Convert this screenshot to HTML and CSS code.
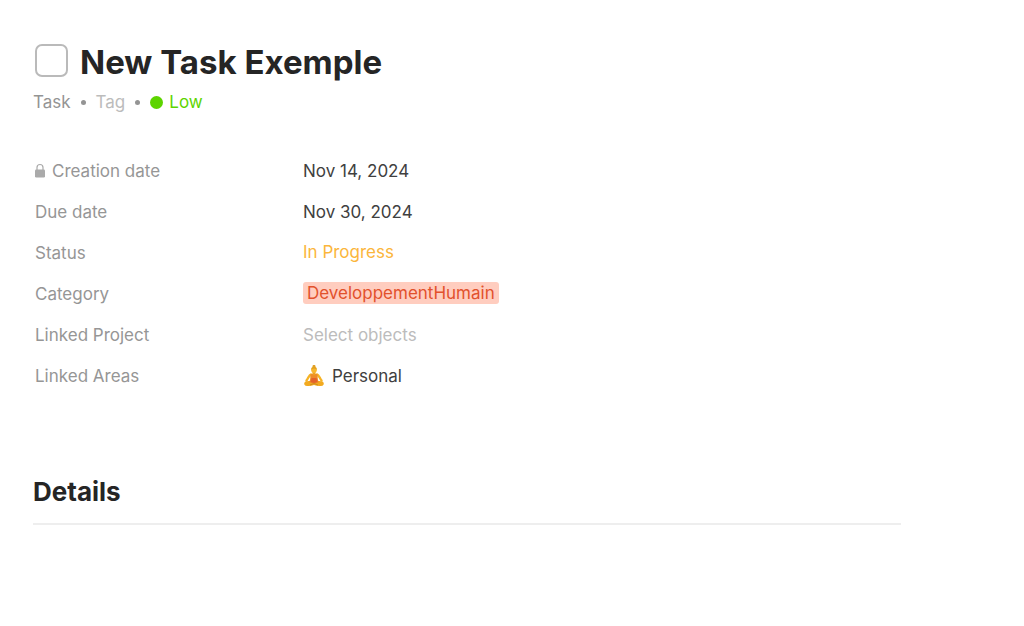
FILE: index.html
```html
<!DOCTYPE html>
<html lang="en">
<head>
<meta charset="utf-8">
<title>New Task Exemple</title>
<link rel="stylesheet" href="styles.css">
</head>
<body>
<main class="page">
  <header class="head">
    <input class="check" type="checkbox" id="done" aria-labelledby="title">
    <h1 class="title" id="title">New Task Exemple</h1>
  </header>
  <div class="meta">
    <span>Task</span><span class="sep"></span><span class="muted">Tag</span><span class="sep"></span><span class="priority"><span class="dot"></span>Low</span>
  </div>
  <dl class="props">
    <div class="row">
      <dt class="name locked"><svg class="lock" viewBox="0 0 10 16" aria-hidden="true"><path d="M2 8V4.500a3 3 0 0 1 6 0V8" fill="none" stroke="#aaaaaa" stroke-width="1.200"/><rect y="6.500" width="10" height="8" rx="1.200" fill="#aaaaaa"/></svg>Creation date</dt>
      <dd class="value">Nov 14, 2024</dd>
    </div>
    <div class="row"><dt class="name">Due date</dt><dd class="value">Nov 30, 2024</dd></div>
    <div class="row"><dt class="name">Status</dt><dd class="value status">In Progress</dd></div>
    <div class="row"><dt class="name">Category</dt><dd class="value category"><span class="tag">DeveloppementHumain</span></dd></div>
    <div class="row"><dt class="name">Linked Project</dt><dd class="value muted">Select objects</dd></div>
    <div class="row"><dt class="name">Linked Areas</dt><dd class="value object">
      <svg class="yoga" viewBox="0 0 22 22" aria-hidden="true">
        <path d="M8 9.500C6 10 5.500 13 3.500 15.500M14 9.500c2 .5 2.500 3.500 4.500 6" fill="none" stroke="#f6b325" stroke-width="2.400" stroke-linecap="round"/>
        <path d="M2.500 16.500c2.500-.8 5-.8 8.500 1 3.500-1.800 6-1.800 8.500-1 1.800.8 1.800 3.500 0 4.200-3 .7-6 .3-8.500-.7-2.500 1-5.500 1.400-8.500.7-1.800-.7-1.800-3.400 0-4.200Z" fill="#f2aa20"/>
        <path d="M7.500 9.300 11 8.500l3.500.8.3 4.700.8 3.200L11 19l-4.600-1.800.8-3.200Z" fill="#ee8b28"/>
        <path d="M8.500 13h5l1 4L11 18l-3.500-1Z" fill="#e4622a"/>
        <path d="M9.500 6h3v3.200L11 10.500 9.500 9.200Z" fill="#eda020"/>
        <rect x="9.500" y="0" width="3" height="3" rx="1.200" fill="#dd9c20"/>
        <rect x="8.200" y="1.800" width="5.600" height="6.200" rx="2.400" fill="#f8b82e"/>
        <path d="M8.200 4.500c0-3.500 5.600-3.500 5.600 0-1.600-1.300-4-1.300-5.600 0Z" fill="#dd9c20"/>
        <path d="m7 20 4-1.500 4 1.500" fill="none" stroke="#cf8c1d"/>
      </svg>Personal</dd></div>
  </dl>
  <section class="details"><h2 class="heading">Details</h2></section>
</main>
</body>
</html>
```
FILE: styles.css
```css
* { box-sizing: border-box; }
body { margin: 0; background: #fff; color: #252525; font-family: Inter, sans-serif; font-size: 17px; line-height: 24px; }
.page { padding: 40px 123px 40px 33px; }
.head { display: flex; align-items: flex-start; gap: 12px; padding-left: 2px; }
.check { appearance: none; width: 33px; height: 33px; margin: 4px 0 0; border: 2px solid #bababa; border-radius: 7px; background: #fff; }
.title { margin: 0; font-size: 33px; line-height: 44px; font-weight: 700; }
.meta { display: flex; align-items: center; gap: 10px; margin-top: 6px; color: #949494; }
.sep { width: 5px; height: 5px; border-radius: 50%; background: #949494; }
.muted { color: #bcbcbc; }
.priority { display: flex; align-items: center; gap: 6px; color: #5dd400; }
.dot { width: 13px; height: 13px; border-radius: 50%; background: #5dd400; }
.props { margin: 36px 0 0; padding-left: 2px; }
.row { display: grid; grid-template-columns: 268px 1fr; align-items: center; min-height: 41px; }
.name { color: #969696; }
.locked { display: flex; align-items: center; gap: 7px; }
.lock { width: 10px; height: 16px; }
.value { margin: 0; color: #404040; }
.value.muted { color: #bcbcbc; }
.value.status { color: #fbb63c; }
.value.status, .value.category { padding-bottom: 2px; }
.tag { display: inline-block; padding: 0 4px; border-radius: 3px; background: #ffcdbf; color: #e2512c; line-height: 22px; }
.object { display: flex; align-items: center; gap: 7px; }
.yoga { width: 22px; height: 22px; }
.details { margin-top: 78px; padding-bottom: 13px; border-bottom: 2px solid #eeeeee; }
.heading { margin: 0; font-size: 26px; line-height: 36px; font-weight: 700; }
```
